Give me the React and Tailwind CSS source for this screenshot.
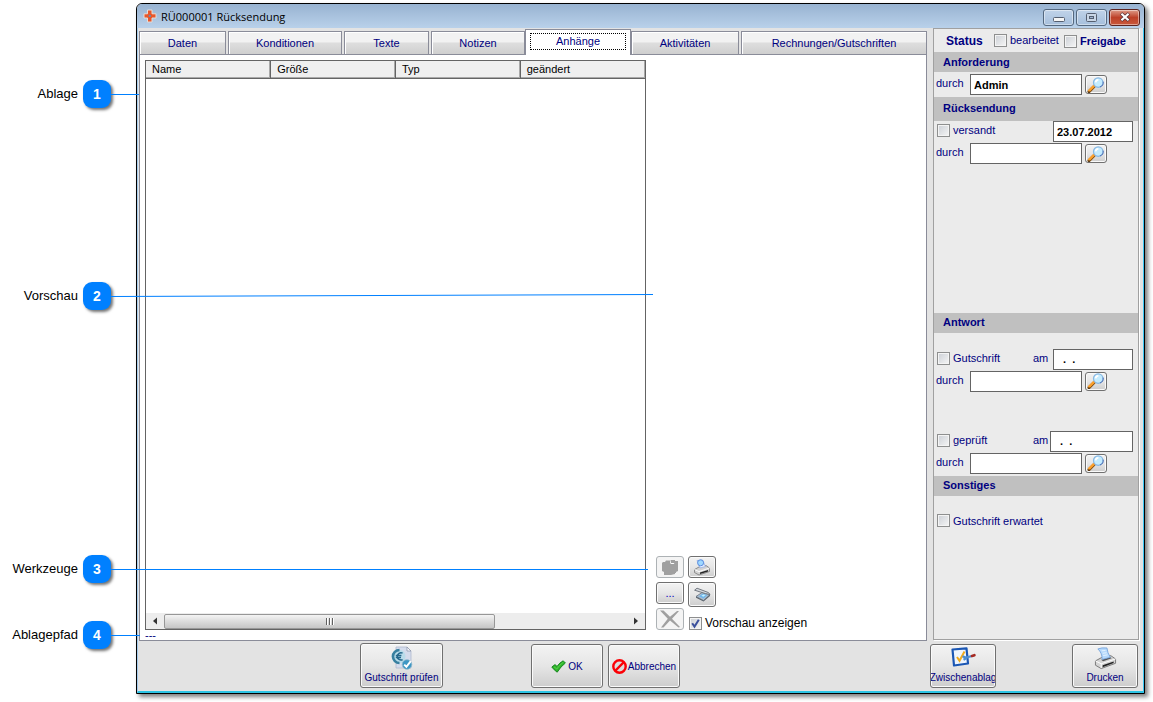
import { useState } from 'react'

const tabs = [
  { id: 'daten', label: 'Daten', width: 'w-[87px] mr-0.5' },
  { id: 'konditionen', label: 'Konditionen', width: 'w-[114px] mr-0.5' },
  { id: 'texte', label: 'Texte', width: 'w-[85px] mr-0.5' },
  { id: 'notizen', label: 'Notizen', width: 'w-[94px]' },
  { id: 'anhaenge', label: 'Anhänge', width: 'w-[106px]' },
  { id: 'aktivitaeten', label: 'Aktivitäten', width: 'w-[108px] mr-0.5' },
  { id: 'rechnungen', label: 'Rechnungen/Gutschriften', width: 'flex-1' }
]

const columns = ['Name', 'Größe', 'Typ', 'geändert']

// pins that lie over the window, each with a leader line
const callouts = [
  { nr: 1, label: 'Ablage', place: 'top-20', length: 28, rise: 0 },
  { nr: 2, label: 'Vorschau', place: 'top-[282px]', length: 542, rise: 2 },
  { nr: 3, label: 'Werkzeuge', place: 'top-[555px]', length: 537, rise: 0 },
  { nr: 4, label: 'Ablagepfad', place: 'top-[621px]', length: 29, rise: 0 }
]

const face = 'bg-linear-to-b from-[#f3f3f3] from-0% via-[#e6e6e6] via-50% to-[#cdcdcd] border border-[#707070] rounded-[3px] shadow-[inset_0_0_0_1px_#fafafa]'

function Callout({ nr, label, place, length, rise }) {
  return (
    <div className={`absolute left-0 z-20 flex items-center pointer-events-none ${place}`}>
      <span className="w-[78px] text-right text-[13px] leading-4 text-black">{label}</span>
      <span className="ml-[5px] size-7 rounded-[9px] bg-[#0080ff] text-white text-sm font-bold flex items-center justify-center shadow-[2px_2px_3px_rgba(0,0,0,0.55)]">
        {nr}
      </span>
      <svg width={length} height="6" className="block">
        <line x1="0" y1="3.5" x2={length} y2={3.5 - rise} stroke="#0080ff" strokeWidth="1" />
      </svg>
    </div>
  )
}

function CheckBox({ label, checked = false, className = '', textClass = '' }) {
  return (
    <label className={`flex items-center gap-[3px] ${className}`}>
      <span className="relative size-[13px] shrink-0">
        <input
          type="checkbox"
          defaultChecked={checked}
          className="peer block size-[13px] appearance-none border border-[#8e8f8f] bg-linear-to-br from-[#cbcfd5] to-[#f6f6f6] shadow-[inset_0_0_0_1px_#f4f4f4]"
        />
        <svg viewBox="0 0 13 13" className="absolute inset-0 hidden peer-checked:block pointer-events-none">
          <path d="M3.2 6.2 L5.5 9.6 L9.8 2.8" fill="none" stroke="#3a4f9c" strokeWidth="2" />
        </svg>
      </span>
      <span className={textClass}>{label}</span>
    </label>
  )
}

function LensIcon() {
  return (
    <svg width="18" height="16" viewBox="0 0 18 16">
      <path d="M2 14.6 L7.4 9.2" stroke="#7a4a10" strokeWidth="3" strokeLinecap="round" />
      <path d="M2.2 13.6 L7 8.8" stroke="#fba02c" strokeWidth="2.4" strokeLinecap="round" />
      <path d="M1.4 15 L2.6 15" stroke="#222" strokeWidth="1.2" />
      <circle cx="11.2" cy="5.6" r="4.7" fill="#c4ecff" stroke="#86b8e4" strokeWidth="1.2" />
      <path d="M8.6 5.4 A2.8 2.8 0 0 1 11.4 2.8" stroke="#fff" strokeWidth="1.8" fill="none" />
      <path d="M13 10 A4.9 4.9 0 0 0 16.2 4.6" stroke="#4f6fb4" strokeWidth="1" fill="none" />
    </svg>
  )
}

function PrinterIcon({ size }) {
  return (
    <svg width={size} height={size} viewBox="0 0 24 24">
      <path d="M1.5 14.5 L8 11 L17.5 9 L22.5 12.5 L22.5 17 L7.5 22.5 L1.5 19 Z" fill="#d4d4d4" stroke="#777" strokeWidth="1" strokeLinejoin="round" />
      <path d="M1.5 14.5 L7.5 17.5 L22.5 12.5 M7.5 17.5 V22" stroke="#fff" strokeWidth="1" fill="none" />
      <path d="M9 19 L20.5 15 L20.5 16.8 L9 21 Z" fill="#222" />
      <path d="M7.5 13.4 L17 10.6 L18.4 11.8 L9.5 14.8 Z" fill="#555" />
      <path d="M4 2 Q8 0.4 13.5 1 Q14 6 17 10.8 L8.5 13 Q8.5 6 4 2 Z" fill="#b5d8fb" stroke="#6b9bd8" strokeWidth="0.8" />
      <path d="M8 4 L12 3.6 M9 6.5 L13.2 6 M9.6 9 L14 8.2" stroke="#e5f3ff" strokeWidth="1" />
    </svg>
  )
}

function PreviewPrinterIcon() {
  return (
    <svg width="18" height="17" viewBox="0 0 18 17">
      <path d="M1.5 10.5 L6 8 L13 6.5 L16.5 9 V12.5 L6 16 L1.5 13.5 Z" fill="#d2d2d2" stroke="#777" strokeWidth="0.8" strokeLinejoin="round" />
      <path d="M1.5 10.5 L6 12.6 L16.5 9" stroke="#fff" strokeWidth="0.9" fill="none" />
      <path d="M7 13.6 L15 11 V12.4 L7 15 Z" fill="#222" />
      <path d="M4 1.5 L9.5 1 L12.5 7.5 L7 9 Z" fill="#e3edff" stroke="#8fa8dc" strokeWidth="0.7" />
      <circle cx="7.6" cy="3.8" r="3" fill="#9fd8ff" stroke="#5486dc" strokeWidth="0.9" />
    </svg>
  )
}

function ScannerIcon() {
  return (
    <svg width="18" height="15" viewBox="0 0 18 15">
      <path d="M3 9.5 L9 5.5 L17 7.5 L10.5 13.5 Z" fill="#a9bdd0" stroke="#6a7480" strokeWidth="0.8" strokeLinejoin="round" />
      <path d="M6 9.2 L9.5 6.8 L14.4 8 L10.4 11.4 Z" fill="#6fb4ea" />
      <path d="M8.4 8.8 L10.4 7.4 L12.6 8 L10.4 9.8 Z" fill="#c6f3ff" />
      <path d="M10.5 13.5 L17 7.5 V9 L10.5 14.6 L3 10.8 V9.5 Z" fill="#5b646e" />
      <path d="M1.6 3.2 L4 1.2 L15.5 5.6 L17 7.5 L12.5 6.6 Z" fill="#d5d9de" stroke="#666d76" strokeWidth="0.9" strokeLinejoin="round" />
    </svg>
  )
}

function CreditIcon() {
  return (
    <svg width="24" height="24" viewBox="0 0 24 24">
      <path d="M6 1 H17 L21 5 V22 H6 Z" fill="#d5dcec" stroke="#b0b9cf" strokeWidth="0.8" />
      <path d="M17 1 V5 H21 Z" fill="#f7f9fd" stroke="#8791a6" strokeWidth="0.7" />
      <circle cx="8.5" cy="10.5" r="7" fill="#b9dcea" />
      <path d="M9.5 4 A6.5 6.5 0 1 0 9.5 17" fill="none" stroke="#377f9f" strokeWidth="2.6" />
      <path d="M12.6 7.2 A3.6 3.6 0 1 0 12.6 13.6 M5.8 9.4 H11.4 M5.8 11.5 H11" fill="none" stroke="#24688c" strokeWidth="1.5" />
      <circle cx="17" cy="18.5" r="4.8" fill="#3e97c4" stroke="#8fb9cd" strokeWidth="0.8" />
      <path d="M14.2 18.6 L16.4 20.8 L20.8 15.2" fill="none" stroke="#fff" strokeWidth="2" />
    </svg>
  )
}

function ClipboardIcon() {
  return (
    <svg width="25" height="20" viewBox="0 0 25 20">
      <path d="M1.5 2.5 L15.5 1.4 L17 16.5 L3 18.5 Z" fill="#eef5fd" stroke="#1b57b4" strokeWidth="2.2" strokeLinejoin="round" />
      <path d="M6 10 L8.5 13.8 L13.5 4.5" fill="none" stroke="#efaa1c" strokeWidth="2" />
      <path d="M11.5 9.4 L15 10.6 L21 9 M12.5 12.8 L16 10.8" fill="none" stroke="#4d8ed0" strokeWidth="2.2" />
      <path d="M21 9 L23.4 8.2" stroke="#a52a22" strokeWidth="2.6" strokeLinecap="round" />
    </svg>
  )
}

function OkIcon() {
  return (
    <svg width="15" height="13" viewBox="0 0 15 13">
      <path d="M0.8 7 L4 4.6 L6 6.4 Q8.6 2.6 12.2 0.8 L14.4 3 Q9.8 6.4 6.2 12.2 Q3 10 0.8 7 Z" fill="#2fb52a" stroke="#11801a" strokeWidth="0.9" strokeLinejoin="round" />
      <path d="M3 6.8 L5.8 9 Q8.8 4.6 12.4 2.2" stroke="#5fd44e" strokeWidth="0.9" fill="none" />
    </svg>
  )
}

function CancelIcon() {
  return (
    <svg width="15" height="15" viewBox="0 0 15 15">
      <circle cx="7.5" cy="7.5" r="6.2" fill="#dcdcdc" stroke="#fb0006" strokeWidth="2.4" />
      <path d="M3.4 11.6 L11.6 3.4" stroke="#fb0006" strokeWidth="2.2" />
    </svg>
  )
}

function CrossLogo() {
  return (
    <svg width="14" height="14" viewBox="0 0 14 14">
      <path d="M4.5 1 H9 V4.8 H13 V9 H9 V13 H4.5 V9 H1 V4.8 H4.5 Z" fill="#e8562a" stroke="#e5ddd8" strokeWidth="1" />
      <circle cx="6.8" cy="6.9" r="1.2" fill="#6c88b0" />
    </svg>
  )
}

function SectionHead({ children, className }) {
  return <h2 className={`bg-[#c0c0c0] pl-[9px] flex items-center text-[11px] font-bold shrink-0 ${className}`}>{children}</h2>
}

function PersonRow({ value = '', name }) {
  return (
    <div className="flex items-start pl-0.5">
      <label htmlFor={name} className="w-[34px] leading-[18px]">durch</label>
      <input id={name} defaultValue={value} className="w-28 h-[21px] bg-white border border-[#646464] px-[3px] font-bold text-black outline-none" />
      <button aria-label="Suchen" className={`ml-[3px] mt-px w-[22px] h-[19px] flex items-center justify-center ${face}`}>
        <LensIcon />
      </button>
    </div>
  )
}

function DateRow({ label, value, name, am = 'mr-[5px]', width }) {
  return (
    <div className="flex items-center pl-[3px] pr-[5px]">
      <CheckBox label={label} className="pb-0.5" />
      {am && <label htmlFor={name} className={`ml-auto pb-0.5 w-[15px] whitespace-nowrap ${am}`}>am</label>}
      <input id={name} aria-label={am ? undefined : 'Versanddatum'} defaultValue={value} className={`h-[21px] bg-white border border-[#646464] px-[3px] font-bold text-black outline-none ${am ? '' : 'ml-auto'} ${width}`} />
    </div>
  )
}

function Sidebar() {
  return (
    <aside className="w-[206px] shrink-0 ml-1.5 mb-px flex flex-col bg-[#ebebeb] border border-[#a0a0a0] shadow-[1px_1px_0_#fff]">
      <div className="h-[23px] shrink-0 flex items-center pl-3">
        <span className="text-xs font-bold w-12">Status</span>
        <CheckBox label="bearbeitet" />
        <CheckBox label="Freigabe" className="ml-[5px] mt-0.5" textClass="font-bold" />
      </div>

      <SectionHead className="h-5">Anforderung</SectionHead>
      <div className="py-0.5">
        <PersonRow name="anforderung-durch" value="Admin" />
      </div>

      <SectionHead className="h-6 pb-0.5">Rücksendung</SectionHead>
      <div className="flex flex-col gap-px flex-1">
        <DateRow label="versandt" name="versandt-am" value="23.07.2012" am="" width="w-20" />
        <PersonRow name="versandt-durch" />
      </div>

      <SectionHead className="h-5">Antwort</SectionHead>
      <div className="flex flex-col gap-px pt-4 pb-[39px]">
        <DateRow label="Gutschrift" name="gutschrift-am" value={'\u00a0\u00a0.\u00a0\u00a0.'} width="w-20" />
        <PersonRow name="gutschrift-durch" />
      </div>
      <div className="flex flex-col gap-px pb-0.5">
        <DateRow label="geprüft" name="geprueft-am" value={'\u00a0\u00a0.\u00a0\u00a0.'} am="mr-0.5" width="w-[83px]" />
        <PersonRow name="geprueft-durch" />
      </div>

      <SectionHead className="h-5">Sonstiges</SectionHead>
      <CheckBox label="Gutschrift erwartet" className="pl-[3px] pt-[17px] pb-[110px]" />
    </aside>
  )
}

function FileList() {
  return (
    <div className="w-[501px] flex flex-col flex-1 bg-white border border-[#646464]">
      <table className="w-full table-fixed border-collapse">
        <thead>
          <tr className="h-[17px] bg-[#efefef]">
            {columns.map((col) => (
              <th key={col} className="border-r border-b border-[#646464] last:border-r-0 pl-1.5 p-0 text-left font-normal text-[11px] leading-4 text-black shadow-[inset_-1px_-1px_0_#a9a9a9]">
                {col}
              </th>
            ))}
          </tr>
        </thead>
        <tbody />
      </table>
      <div className="mt-auto h-4 bg-[#ededed] flex items-center">
        <button aria-label="Nach links" className="w-[18px] h-4 flex items-center justify-center">
          <svg width="4" height="8" viewBox="0 0 4 8"><path d="M4 0.5 V7.5 L0 4 Z" fill="#333" /></svg>
        </button>
        <div className="w-[331px] h-[15px] border border-[#979797] rounded-xs bg-linear-to-b from-[#f4f4f4] via-[#dcdcdc] to-[#c6c6c6] flex items-center justify-center gap-px">
          <span className="w-0.5 h-[7px] bg-[#606060] border-r border-white" />
          <span className="w-0.5 h-[7px] bg-[#606060] border-r border-white" />
          <span className="w-0.5 h-[7px] bg-[#606060] border-r border-white" />
        </div>
        <button aria-label="Nach rechts" className="ml-auto w-[18px] h-4 flex items-center justify-center">
          <svg width="4" height="8" viewBox="0 0 4 8"><path d="M0 0.5 V7.5 L4 4 Z" fill="#333" /></svg>
        </button>
      </div>
    </div>
  )
}

function Tools() {
  const off = 'border border-[#adb2b5] rounded-[3px] bg-[#f4f4f4]'
  return (
    <div className="mt-auto ml-2.5 mb-[9px] flex gap-1 items-start">
      <div className="flex flex-col gap-1">
        <button disabled aria-label="Einfügen" className={`w-7 h-[22px] flex items-center justify-center ${off}`}>
          <svg width="18" height="17" viewBox="0 0 18 17">
            <path d="M1 4 L2 3 H4 L5 1.5 H9 V4 L10 5 H13 L14 2 H17 V12 L15 13 V14 H14 V15 L10 16 H3 V13 L1 12 Z" fill="#a0a0a0" />
            <path d="M9.5 1 H14 V4 H10" fill="#a0a0a0" />
            <path d="M10.5 4.5 H12.5" stroke="#fff" strokeWidth="1" />
          </svg>
        </button>
        <button className={`w-7 h-[22px] flex items-center justify-center text-[11px] text-[#0000c0] ${face}`}>...</button>
        <button disabled aria-label="Löschen" className={`w-7 h-[22px] flex items-center justify-center ${off}`}>
          <svg width="22" height="20" viewBox="0 0 22 20">
            <path d="M1 1.5 H4.5 L11 7.8 L18 2 H20 L13 9.8 L21 18 L19.5 18.5 L11 11.6 L4.5 18.5 H2 L8.8 9.8 Z" fill="#a0a0a0" />
          </svg>
        </button>
      </div>
      <div className="flex flex-col">
        <button aria-label="Druckvorschau" className={`w-7 h-[22px] flex items-center justify-center ${face}`}>
          <PreviewPrinterIcon />
        </button>
        <button aria-label="Scannen" className={`mt-1 w-7 h-[25px] flex items-center justify-center ${face}`}>
          <ScannerIcon />
        </button>
        <CheckBox label="Vorschau anzeigen" checked className="mt-2 pl-px whitespace-nowrap" textClass="text-xs leading-4 text-black" />
      </div>
    </div>
  )
}

function TitleBar() {
  const control = 'w-[31px] h-[17px] border rounded-[3px] flex items-center justify-center shadow-[inset_0_0_0_1px_rgba(255,255,255,0.45)]'
  const blue = 'border-[#54687f] bg-linear-to-b from-[#c0d3e9] to-[#a6bfdc]'
  return (
    <header className="h-6 shrink-0 flex items-center pl-1.5 pr-1 rounded-t-[5px] bg-linear-to-b from-[#98b3d1] to-[#b9d1ea]">
      <CrossLogo />
      <h1 className="ml-1 mt-0.5 text-[11px] text-black font-['Open_Sans','Noto_Sans',sans-serif]">RÜ000001 Rücksendung</h1>
      <div className="ml-auto mt-0.5 flex gap-0.5">
        <button aria-label="Minimieren" className={`${control} ${blue}`}>
          <svg width="12" height="5" viewBox="0 0 12 5" className="mt-1"><rect x="0.5" y="0.5" width="11" height="4" rx="1" fill="#f5f5f5" stroke="#555f70" /></svg>
        </button>
        <button aria-label="Maximieren" className={`${control} ${blue}`}>
          <svg width="11" height="9" viewBox="0 0 11 9">
            <rect x="0.5" y="0.5" width="10" height="8" rx="1" fill="#c9d6e6" stroke="#555f70" />
            <rect x="3.5" y="3.5" width="4" height="2" fill="#9fb6d2" stroke="#555f70" />
          </svg>
        </button>
        <button aria-label="Schließen" className={`border-[#5c2420] bg-linear-to-b from-[#dc9a88] from-0% via-[#bd4028] via-50% to-[#c9593c] ${control}`}>
          <svg width="12" height="10" viewBox="0 0 12 10">
            <path d="M2 1.5 L10 8.5 M10 1.5 L2 8.5" stroke="#50303a" strokeWidth="3.6" />
            <path d="M2.4 1.8 L9.6 8.2 M9.6 1.8 L2.4 8.2" stroke="#fff" strokeWidth="2.2" />
          </svg>
        </button>
      </div>
    </header>
  )
}

function Footer() {
  return (
    <footer className="h-[50px] shrink-0 flex items-start pt-[3px] pl-[221px] text-[10px]">
      <button className={`-mt-px w-[83px] h-[45px] flex flex-col items-center pt-0.5 whitespace-nowrap ${face}`}>
        <CreditIcon />
        <span className="leading-4">Gutschrift prüfen</span>
      </button>
      <button className={`ml-[88px] w-[72px] h-11 flex items-center justify-center gap-0.5 ${face}`}>
        <OkIcon />
        OK
      </button>
      <button className={`ml-[5px] w-[72px] h-11 flex items-center justify-center gap-px ${face}`}>
        <CancelIcon />
        Abbrechen
      </button>
      <button className={`ml-auto w-[66px] h-11 flex flex-col items-center pt-0.5 overflow-hidden ${face}`}>
        <span className="h-[23px]"><ClipboardIcon /></span>
        <span className="leading-4">Zwischenablag</span>
      </button>
      <button className={`ml-[76px] mr-px w-[66px] h-11 flex flex-col items-center pt-0.5 ${face}`}>
        <span className="h-[23px]"><PrinterIcon size={23} /></span>
        <span className="leading-4">Drucken</span>
      </button>
    </footer>
  )
}

export default function App() {
  const [active, setActive] = useState('anhaenge')

  return (
    <div className="relative h-screen bg-white flex pt-[3px] pr-2 pb-2 pl-[136px] font-['Liberation_Sans',Arial,sans-serif] text-[11px] text-[#000080]">
      <main className="flex-1 min-w-0 flex flex-col border border-black rounded-t-md bg-[#e3e3e3] shadow-[3px_3px_4px_rgba(0,0,0,0.5)]">
        <TitleBar />
        <div className="flex-1 min-h-0 flex flex-col border-l border-l-[#a5cbec] border-r border-r-[#3cc8f4] border-b-2 border-b-[#2cc4e4] pl-px pr-1">
          <div className="flex-1 min-h-0 flex">
            <div className="flex-1 min-w-0 flex flex-col">
              <nav role="tablist" className="h-[26px] shrink-0 flex items-end">
                {tabs.map((tab) => (
                  <button
                    key={tab.id}
                    role="tab"
                    aria-selected={tab.id === active}
                    onClick={() => setActive(tab.id)}
                    className={`border border-b-0 border-[#8a8c99] ${tab.width} ${
                      tab.id === active
                        ? 'relative z-10 h-[26px] -mb-px bg-white px-1 pt-[3px] pb-[5px]'
                        : 'h-[23px] bg-linear-to-b from-[#f2f2f2] from-45% via-[#dedede] via-50% to-[#cfcfcf] shadow-[inset_1px_1px_0_#fff]'
                    }`}
                  >
                    {tab.id === active
                      ? <span className="flex h-full items-center justify-center border border-dotted border-black">{tab.label}</span>
                      : tab.label}
                  </button>
                ))}
              </nav>

              <div className="flex-1 min-h-0 flex bg-white border border-[#8a8c99] pl-[5px] pt-[5px]">
                <div className="flex flex-col shrink-0">
                  <FileList />
                  <span className="h-2.5 leading-[10px]">---</span>
                </div>
                <Tools />
              </div>
            </div>
            <Sidebar />
          </div>
          <Footer />
        </div>
      </main>

      {callouts.map((c) => (
        <Callout key={c.nr} {...c} />
      ))}
    </div>
  )
}
